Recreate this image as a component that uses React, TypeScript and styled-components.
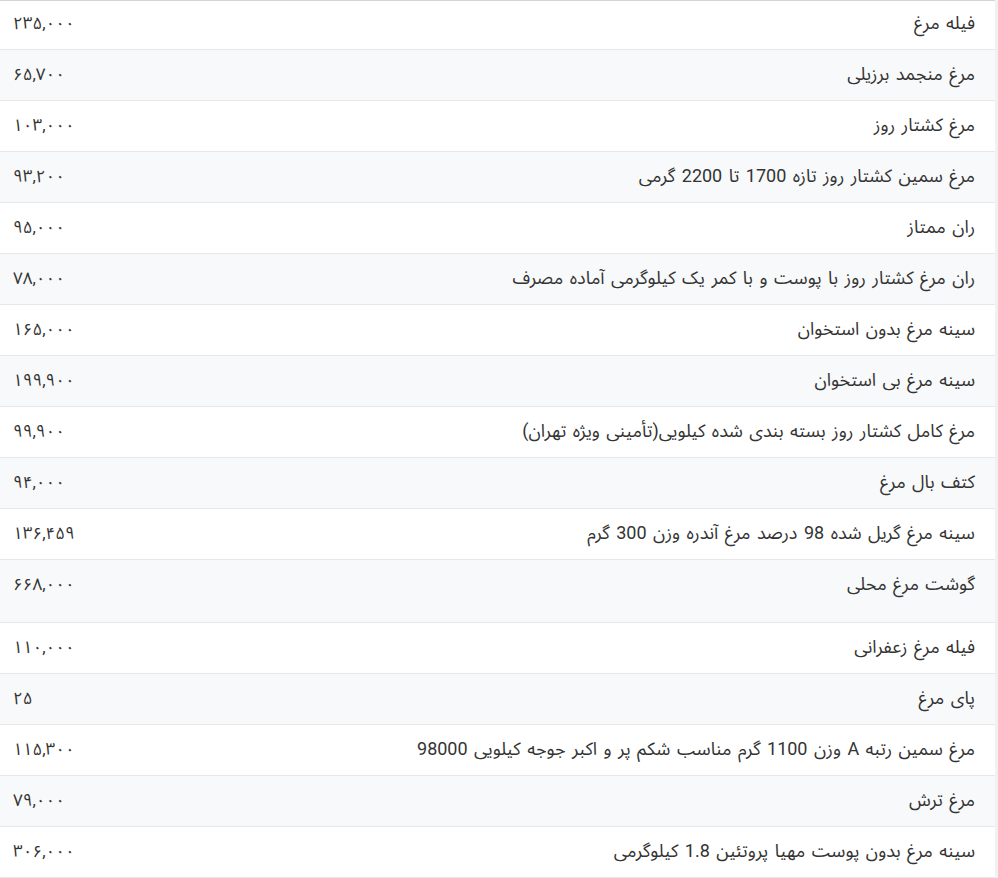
import React from "react";
import styled, { createGlobalStyle } from "styled-components";

const Global = createGlobalStyle`
  html, body { margin: 0; padding: 0; background: #f1f1f1; }
  body { font-family: Roboto, "Noto Sans Arabic", "DejaVu Sans", sans-serif; }
`;

const Frame = styled.div`
  width: 995px;
  background: #ffffff;
  border-top: 1px solid #d4d4d4;
`;

const Table = styled.table`
  width: 100%;
  border-collapse: collapse;
  direction: rtl;
  color: #333333;
`;

const Row = styled.tr<{ $alt: boolean }>`
  background: ${(p) => (p.$alt ? "#f8f9fa" : "#ffffff")};
  border-bottom: 1px solid #e6e7e9;
  &:first-child td { padding-top: 10px; }
`;

const NameCell = styled.td<{ $tall: boolean }>`
  text-align: right;
  vertical-align: top;
  font-size: 18px;
  word-spacing: 2px;
  padding: 12px 20px ${(p) => (p.$tall ? "26px" : "14px")} 12px;
  line-height: 24px;
`;

const PriceCell = styled.td<{ $tall: boolean }>`
  text-align: left;
  vertical-align: top;
  font-size: 17px;
  padding: 12px 13px ${(p) => (p.$tall ? "26px" : "14px")} 13px;
  line-height: 24px;
  white-space: nowrap;
  width: 120px;
`;

const items: [string, string][] = [
  ["فیله مرغ", "۲۳۵,۰۰۰"],
  ["مرغ منجمد برزیلی", "۶۵,۷۰۰"],
  ["مرغ کشتار روز", "۱۰۳,۰۰۰"],
  ["مرغ سمین کشتار روز تازه 1700 تا 2200 گرمی", "۹۳,۲۰۰"],
  ["ران ممتاز", "۹۵,۰۰۰"],
  ["ران مرغ کشتار روز با پوست و با کمر یک کیلوگرمی آماده مصرف", "۷۸,۰۰۰"],
  ["سینه مرغ بدون استخوان", "۱۶۵,۰۰۰"],
  ["سینه مرغ بی استخوان", "۱۹۹,۹۰۰"],
  ["مرغ کامل کشتار روز بسته بندی شده کیلویی(تأمینی ویژه تهران)", "۹۹,۹۰۰"],
  ["کتف بال مرغ", "۹۴,۰۰۰"],
  ["سینه مرغ گریل شده 98 درصد مرغ آندره وزن 300 گرم", "۱۳۶,۴۵۹"],
  ["گوشت مرغ محلی", "۶۶۸,۰۰۰"],
  ["فیله مرغ زعفرانی", "۱۱۰,۰۰۰"],
  ["پای مرغ", "۲۵"],
  ["مرغ سمین رتبه A وزن 1100 گرم مناسب شکم پر و اکبر جوجه کیلویی 98000", "۱۱۵,۳۰۰"],
  ["مرغ ترش", "۷۹,۰۰۰"],
  ["سینه مرغ بدون پوست مهیا پروتئین 1.8 کیلوگرمی", "۳۰۶,۰۰۰"],
];

export default function App() {
  return (
    <>
      <Global />
      <Frame>
        <Table>
          <tbody>
            {items.map(([name, price], i) => {
              const tall = i === 11;
              return (
                <Row key={i} $alt={i % 2 === 1}>
                  <NameCell $tall={tall}>{name}</NameCell>
                  <PriceCell $tall={tall} dir="rtl">{price}</PriceCell>
                </Row>
              );
            })}
          </tbody>
        </Table>
      </Frame>
    </>
  );
}
